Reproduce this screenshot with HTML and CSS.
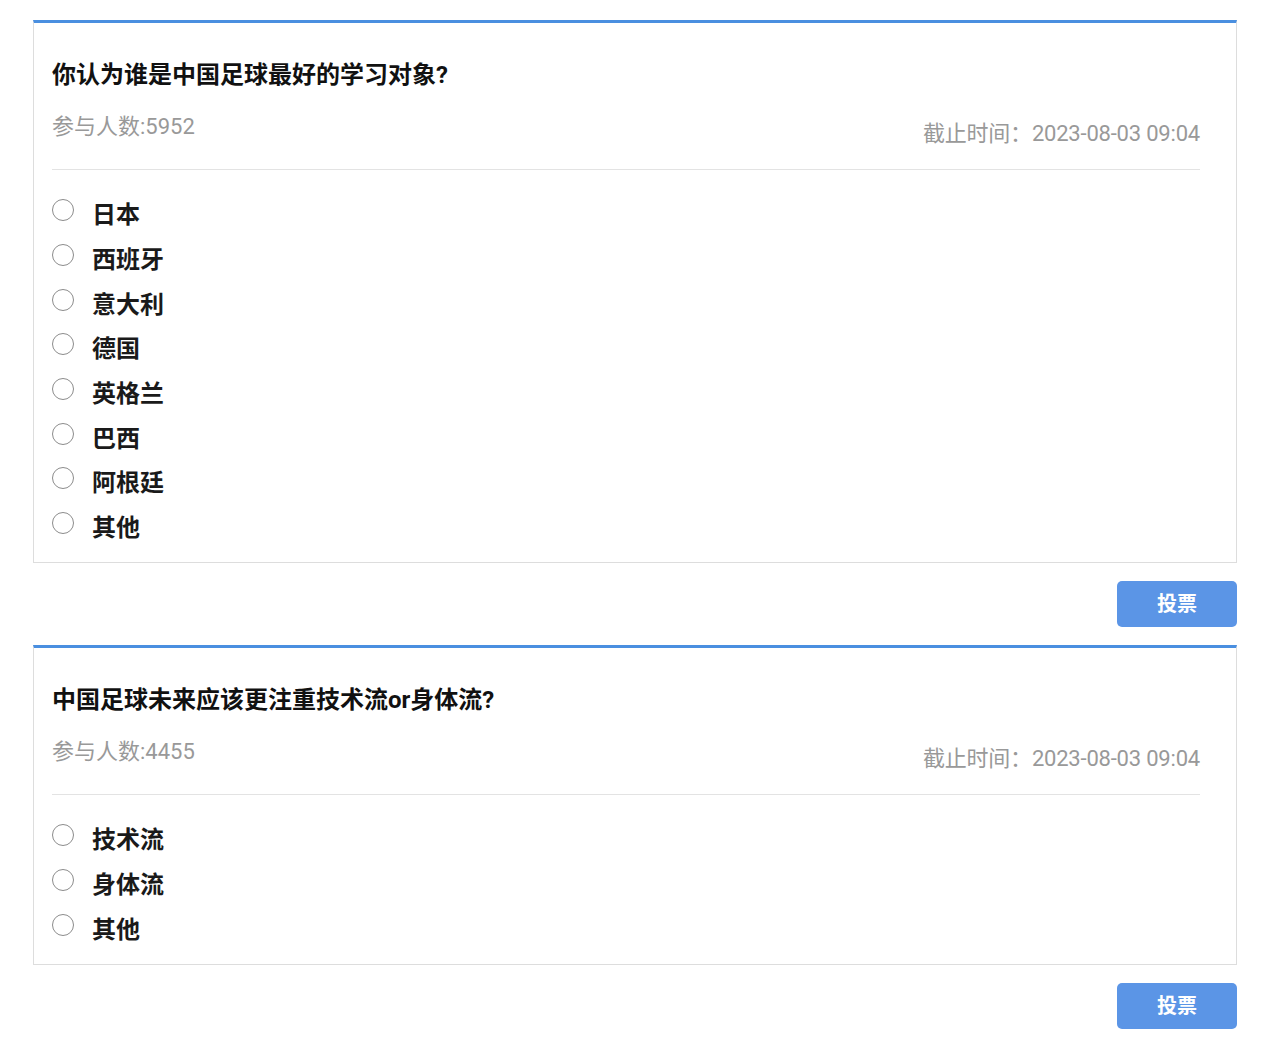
FILE: index.html
```html
<!DOCTYPE html>
<html lang="zh-CN">
<head>
  <meta charset="UTF-8">
  <meta name="viewport" content="width=device-width, initial-scale=1.0">
  <title>投票</title>
  <link rel="stylesheet" href="styles.css">
</head>
<body>
  <div class="wrap">
    <!-- 第一个投票 -->
    <div class="vote">
      <h3 class="title">你认为谁是中国足球最好的学习对象?</h3>
      <div class="info">
        <span class="count">参与人数:5952</span>
        <span class="deadline">截止时间：2023-08-03 09:04</span>
      </div>
      <ul class="options">
        <li><span class="radio"></span>日本</li>
        <li><span class="radio"></span>西班牙</li>
        <li><span class="radio"></span>意大利</li>
        <li><span class="radio"></span>德国</li>
        <li><span class="radio"></span>英格兰</li>
        <li><span class="radio"></span>巴西</li>
        <li><span class="radio"></span>阿根廷</li>
        <li><span class="radio"></span>其他</li>
      </ul>
    </div>
    <div class="btn-row">
      <a href="javascript:;" class="btn">投票</a>
    </div>
    <!-- 第二个投票 -->
    <div class="vote">
      <h3 class="title">中国足球未来应该更注重技术流or身体流?</h3>
      <div class="info">
        <span class="count">参与人数:4455</span>
        <span class="deadline">截止时间：2023-08-03 09:04</span>
      </div>
      <ul class="options">
        <li><span class="radio"></span>技术流</li>
        <li><span class="radio"></span>身体流</li>
        <li><span class="radio"></span>其他</li>
      </ul>
    </div>
    <div class="btn-row">
      <a href="javascript:;" class="btn">投票</a>
    </div>
  </div>
</body>
</html>
```

FILE: styles.css
```css
/* 清除默认样式 */
* {
  margin: 0;
  padding: 0;
}
ul,ol {
  list-style: none;
}
body {
  background-color: #fff;
  font-family: Roboto, "Noto Sans CJK SC", sans-serif;
}
.wrap {
  width: 1204px;
  margin-left: 33px;
  padding-top: 20px;
}
/* 投票卡片 */
.vote {
  border: 1px solid #ddd;
  border-top: 3px solid #4a8fe0;
  padding: 36px 36px 14px 18px;
}
.vote .title {
  font-size: 24px;
  line-height: 32px;
  font-weight: bold;
  color: #111;
}
.vote .info {
  display: flex;
  justify-content: space-between;
  align-items: flex-start;
  margin-top: 21px;
  padding-bottom: 20px;
  border-bottom: 1px solid #e3e3e3;
  font-size: 22px;
  line-height: 30px;
  color: #999;
}
.vote .info .deadline {
  margin-top: 7px;
  letter-spacing: -0.2px;
}
/* 选项 */
.vote .options {
  margin-top: 20.5px;
}
.vote .options li {
  display: flex;
  align-items: center;
  height: 44.7px;
  font-size: 24px;
  font-weight: bold;
  color: #1a1a1a;
}
.vote .options .radio {
  width: 20px;
  height: 20px;
  margin: -5px 18px 0 0;
  border: 1.5px solid #8c8c8c;
  border-radius: 50%;
}
/* 按钮 */
.btn-row {
  display: flex;
  justify-content: flex-end;
  padding: 18px 0;
}
.btn-row .btn {
  width: 120px;
  height: 46px;
  border-radius: 5px;
  background-color: #5b95e6;
  font-size: 20px;
  line-height: 46px;
  font-weight: bold;
  text-align: center;
  color: #fff;
  text-decoration: none;
}
```
